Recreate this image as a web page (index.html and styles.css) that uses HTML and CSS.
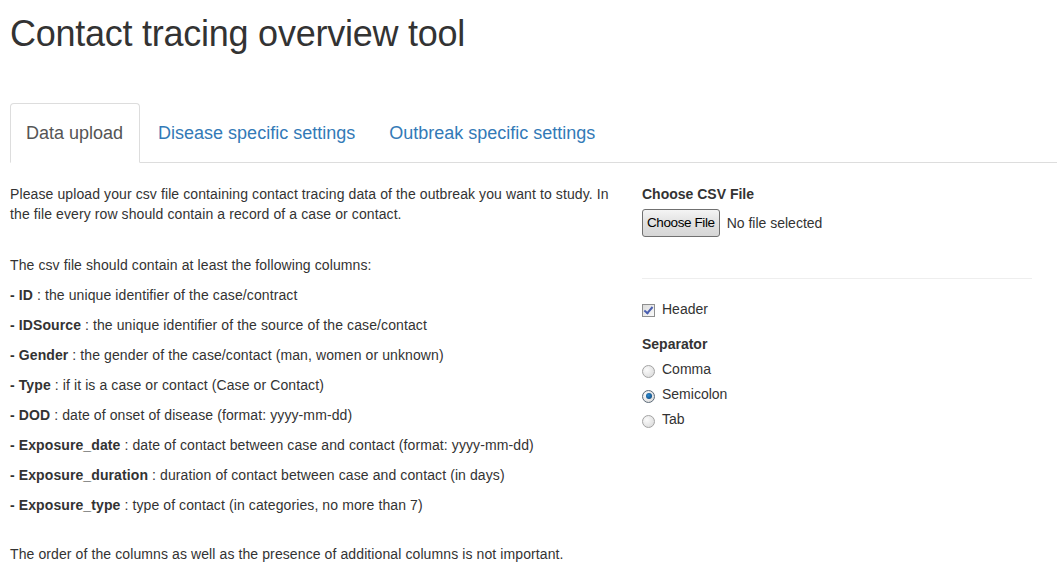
FILE: index.html
```html
<!DOCTYPE html>
<html lang="en">
<head>
<meta charset="utf-8">
<title>Contact tracing overview tool</title>
<link rel="stylesheet" href="styles.css">
</head>
<body>
<div class="page">
  <h1 class="title">Contact tracing overview tool</h1>
  <ul class="tabs">
    <li class="tab active"><a href="#">Data upload</a></li>
    <li class="tab"><a href="#">Disease specific settings</a></li>
    <li class="tab"><a href="#">Outbreak specific settings</a></li>
  </ul>
  <div class="content">
    <div class="main">
      <p class="intro">Please upload your csv file containing contact tracing data of the outbreak you want to study. In the file every row should contain a record of a case or contact.</p>
      <p>The csv file should contain at least the following columns:</p>
      <p><b>- ID</b> : the unique identifier of the case/contract</p>
      <p><b>- IDSource</b> : the unique identifier of the source of the case/contact</p>
      <p><b>- Gender</b> : the gender of the case/contact (man, women or unknown)</p>
      <p><b>- Type</b> : if it is a case or contact (Case or Contact)</p>
      <p><b>- DOD</b> : date of onset of disease (format: yyyy-mm-dd)</p>
      <p><b>- Exposure_date</b> : date of contact between case and contact (format: yyyy-mm-dd)</p>
      <p><b>- Exposure_duration</b> : duration of contact between case and contact (in days)</p>
      <p><b>- Exposure_type</b> : type of contact (in categories, no more than 7)</p>
      <p class="note">The order of the columns as well as the presence of additional columns is not important.</p>
    </div>
    <div class="side">
      <div class="group">
        <div class="label">Choose CSV File</div>
        <div class="file">
          <span class="file-btn">Choose File</span>
          <span class="file-name">No file selected</span>
        </div>
      </div>
      <hr class="rule">
      <div class="group">
        <div class="option"><span class="check on"></span>Header</div>
      </div>
      <div class="group">
        <div class="label">Separator</div>
        <div class="option"><span class="radio"></span>Comma</div>
        <div class="option"><span class="radio on"></span>Semicolon</div>
        <div class="option"><span class="radio"></span>Tab</div>
      </div>
    </div>
  </div>
</div>
</body>
</html>
```

FILE: styles.css
```css
html, body {
  margin: 0;
  padding: 0;
  background: #fff;
}
body {
  font-family: "Liberation Sans", Arial, sans-serif;
  font-size: 14px;
  line-height: 20px;
  color: #333;
}
.page {
  padding-left: 10px;
}
.title {
  margin: 14px 0 0 0;
  font-size: 36px;
  font-weight: 500;
  line-height: 40px;
  letter-spacing: -0.25px;
  color: #333;
}
.tabs {
  list-style: none;
  margin: 49px 0 0 0;
  padding: 0;
  display: flex;
  border-bottom: 1px solid #ddd;
}
.tab {
  margin-right: 2px;
  margin-bottom: -1px;
}
.tab a {
  display: block;
  padding: 17px 15px 17px 15px;
  font-size: 18px;
  line-height: 24px;
  color: #337ab7;
  text-decoration: none;
  border: 1px solid transparent;
  border-radius: 4px 4px 0 0;
}
.tab.active a {
  padding-right: 16px;
  color: #555;
  background: #fff;
  border-color: #ddd #ddd transparent #ddd;
}
.content {
  display: grid;
  grid-template-columns: 612px 390px;
  column-gap: 20px;
  margin-top: 21px;
}
.main {
  letter-spacing: 0.1px;
}
.main p {
  margin: 0 0 10px 0;
}
.main p.intro {
  margin-bottom: 31px;
}
.main p.note {
  margin-top: 29px;
}
.main b {
  font-weight: bold;
}
.group {
  margin-bottom: 15px;
}
.label {
  font-weight: bold;
  margin-bottom: 5px;
}
.file {
  display: flex;
  align-items: center;
  height: 28px;
}
.file-btn {
  box-sizing: border-box;
  height: 28px;
  padding: 0 4px;
  display: inline-flex;
  align-items: center;
  font-size: 13.5px;
  letter-spacing: -0.4px;
  color: #000;
  border: 1px solid #707070;
  border-radius: 3px;
  background: linear-gradient(#f4f4f4, #e1e1e1 50%, #d6d6d6);
}
.file-name {
  margin-left: 7px;
}
.rule {
  border: 0;
  border-top: 1px solid #eee;
  margin: 41px 0 20px 0;
  height: 0;
}
.option {
  display: flex;
  align-items: center;
  height: 20px;
  margin-bottom: 5px;
}
.group .option:last-child {
  margin-bottom: 0;
}
.check {
  box-sizing: border-box;
  width: 13px;
  height: 13px;
  border: 1px solid #8e8f8f;
  background: linear-gradient(135deg, #dcdcdc, #fafafa);
  margin: 2px 7px 0 0;
  position: relative;
}
.check.on::after {
  content: "";
  position: absolute;
  left: 3px;
  top: 0px;
  width: 3px;
  height: 7px;
  border: solid #4a5fb0;
  border-width: 0 2px 2px 0;
  transform: rotate(40deg);
}
.radio {
  box-sizing: border-box;
  width: 13px;
  height: 13px;
  border-radius: 50%;
  border: 1px solid #a3a3a3;
  background: radial-gradient(circle at 35% 35%, #fbfbfb, #d6d6d6);
  margin: 4px 7px 0 0;
  position: relative;
}
.radio.on {
  border-color: #5c6a78;
}
.radio.on::after {
  content: "";
  position: absolute;
  left: 2.5px;
  top: 2.5px;
  width: 6px;
  height: 6px;
  border-radius: 50%;
  background: radial-gradient(circle at 40% 40%, #2d8ad0, #0a3d6e);
}
```
